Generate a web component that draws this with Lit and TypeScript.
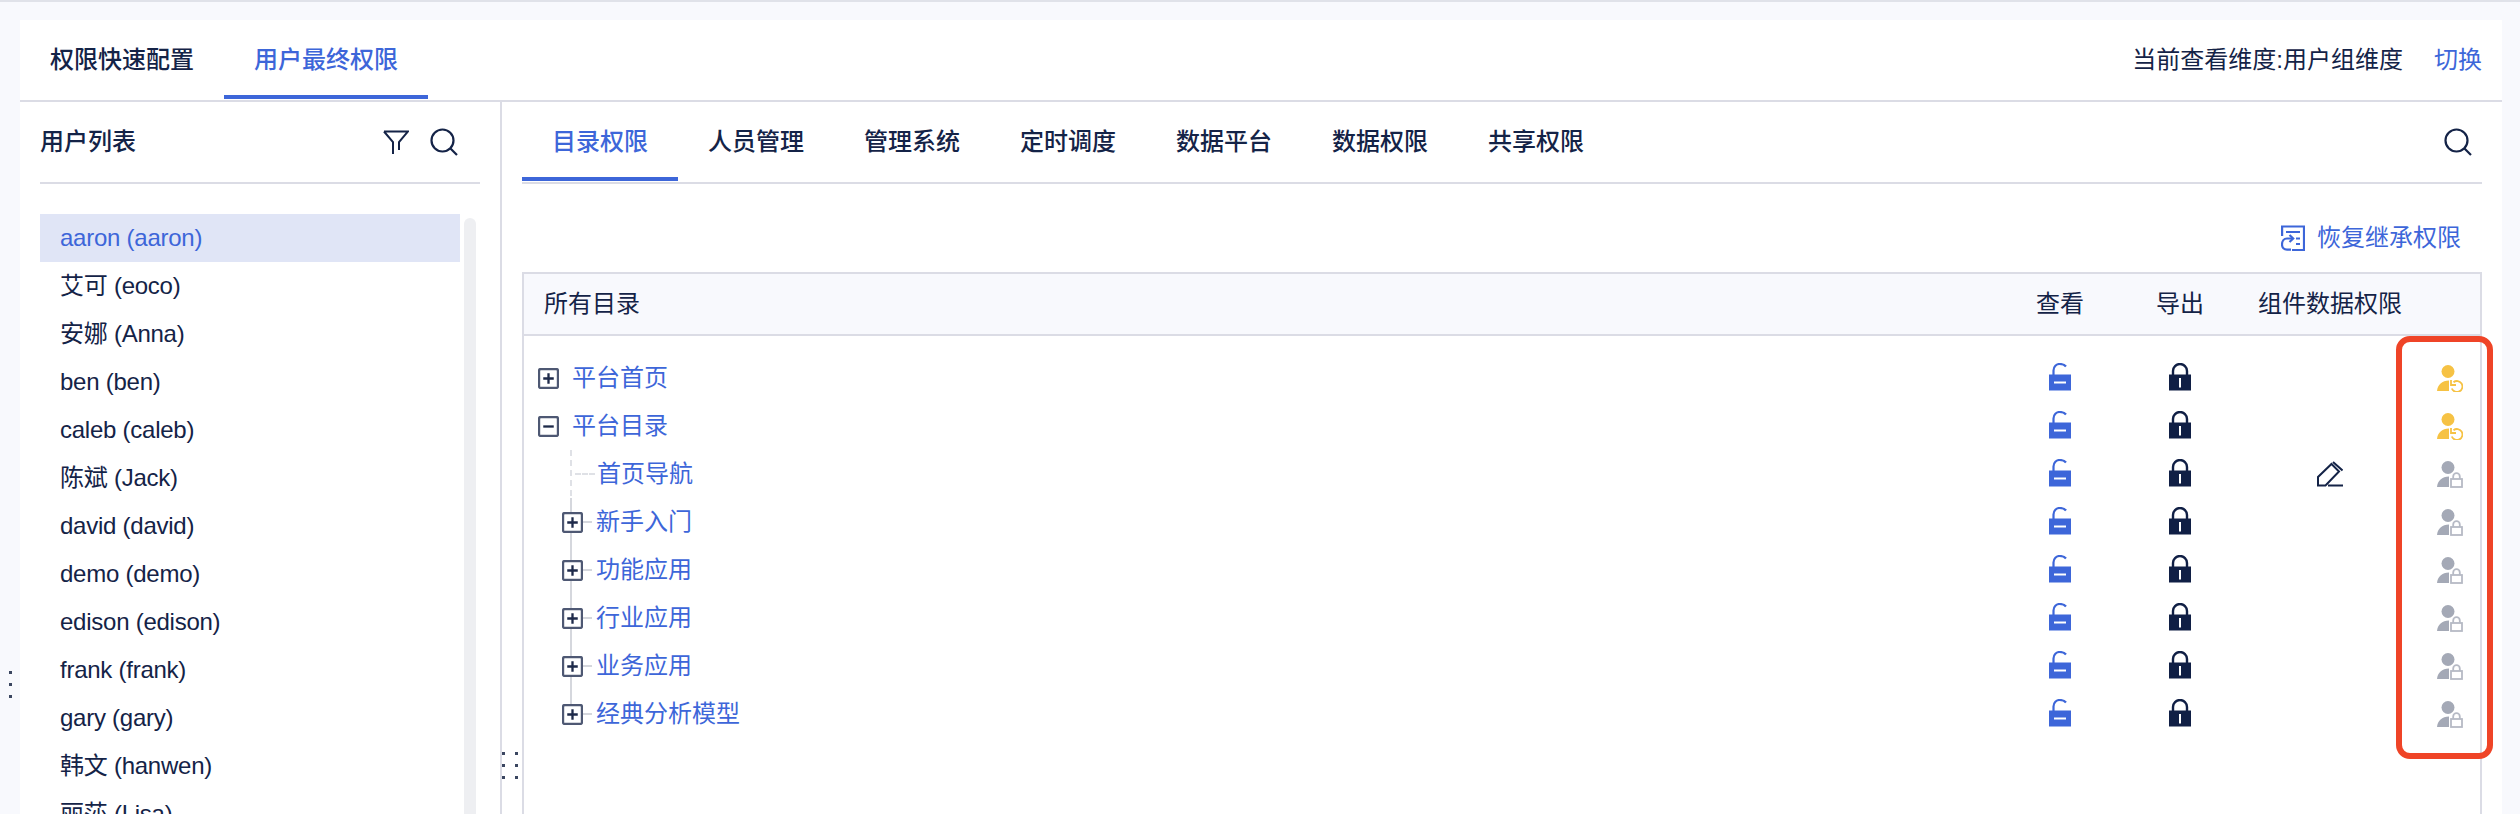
import { LitElement, html, css, svg } from "lit";
import { customElement } from "lit/decorators.js";

const users = ["aaron (aaron)", "艾可 (eoco)", "安娜 (Anna)", "ben (ben)", "caleb (caleb)", "陈斌 (Jack)", "david (david)", "demo (demo)", "edison (edison)", "frank (frank)", "gary (gary)", "韩文 (hanwen)", "丽莎 (Lisa)"];
const subTabs = ["目录权限", "人员管理", "管理系统", "定时调度", "数据平台", "数据权限", "共享权限"];

type Node = { name: string; level: number; icon: "plus" | "minus" | "none"; line: "none" | "leaf" | "mid" | "last"; pencil?: boolean; reset?: boolean };
const nodes: Node[] = [
  { name: "平台首页", level: 0, icon: "plus", line: "none", reset: true },
  { name: "平台目录", level: 0, icon: "minus", line: "none", reset: true },
  { name: "首页导航", level: 1, icon: "none", line: "leaf", pencil: true },
  { name: "新手入门", level: 1, icon: "plus", line: "mid" },
  { name: "功能应用", level: 1, icon: "plus", line: "mid" },
  { name: "行业应用", level: 1, icon: "plus", line: "mid" },
  { name: "业务应用", level: 1, icon: "plus", line: "mid" },
  { name: "经典分析模型", level: 1, icon: "plus", line: "last" },
];

const searchIcon = html`<svg class="i28" viewBox="0 0 28 28" fill="none" stroke="currentColor" stroke-width="2.2"><circle cx="12.5" cy="12.5" r="11"/><path d="M20.5 20.5L27 27"/></svg>`;
const filterIcon = html`<svg class="ifilter" viewBox="0 0 26 24" fill="none" stroke="currentColor" stroke-width="2"><path d="M1 1.5H25L16 12V20M1 1.5L10 12V24"/></svg>`;
const restoreIcon = html`<svg class="irestore" viewBox="0 0 24 26" fill="none" stroke="currentColor" stroke-width="2.2"><path d="M1.1 11V1.5H23V25H11"/><path d="M5 7H19M15 13.5H19M15 19H19"/><path d="M12 13.5H6C3 13.5 1 16 1 19.5C1 22.5 3 24.6 6 24.6H10"/><path d="M8.5 10L12.2 13.5L8.5 17"/></svg>`;
const openLock = html`<svg class="lock" viewBox="0 0 22 28"><path d="M4.5 12V7.5C4.5 3.5 7.5 1 10.5 1C13 1 15.5 1.5 17 3.5" fill="none" stroke="#3d66d9" stroke-width="2.2"/><rect y="11.5" width="22" height="16" fill="#3d66d9"/><rect x="5" y="18.5" width="12" height="2" fill="#fff"/></svg>`;
const closedLock = html`<svg class="lock" viewBox="0 0 22 28"><path d="M4 12V8a7 7 0 0 1 14 0v4" fill="none" stroke="#101f45" stroke-width="2.4"/><rect y="11.5" width="22" height="16" fill="#101f45"/><rect x="10" y="15" width="2" height="9.5" fill="#fff"/></svg>`;
const pencilIcon = html`<svg class="pencil" viewBox="0 0 26 26" fill="none" stroke="#142347" stroke-width="2"><path d="M1 24.5V16L14.5 3L22 10.5L8.5 24.5Z"/><path d="M16 1L25.5 9.5M11 24.5H26"/></svg>`;
const personBase = (c: string) => svg`<circle cx="11" cy="7.5" r="6.5" fill="${c}"/><path d="M12 16.5V27H0C0.5 21 5 16.5 12 16.5Z" fill="${c}"/>`;
const personReset = html`<svg class="person" viewBox="0 0 26 28" fill="none">${personBase("#f6c244")}<path d="M14 16V21H19M16.5 18.2A5.5 5.5 0 1 1 14.8 24.5" stroke="#f6c244" stroke-width="1.8"/></svg>`;
const personLock = html`<svg class="person" viewBox="0 0 26 28" fill="none">${personBase("#a4a9b6")}<rect x="14" y="19" width="11" height="8" stroke="#b6bac5" stroke-width="1.8"/><path d="M16.2 19V16.5a3.3 3.3 0 0 1 6.6 0V19" stroke="#b6bac5" stroke-width="1.8"/></svg>`;

const treeBox = (kind: "plus" | "minus") => html`<svg class="tbox" viewBox="0 0 20 20" fill="none"><rect x="1" y="1" width="18" height="18" rx="1.5" fill="#fff" stroke="#4e5873" stroke-width="2.2"/><path d="${kind === "plus" ? "M5 10H15M10 5V15" : "M5 10H15"}" stroke="#1e2a4a" stroke-width="2.2"/></svg>`;

@customElement("app-root")
export class AppRoot extends LitElement {
  static styles = css`
    :host {
      display: block;
      position: relative;
      height: 814px;
      overflow: hidden;
      box-sizing: border-box;
      background: #f8f9fd;
      border-top: 2px solid #e0e2e9;
      padding: 18px 18px 0 20px;
      color: #142347;
      font: 400 24px/1.2 "Liberation Sans", "Noto Sans CJK SC", sans-serif;
    }
    svg { display: block; flex: none; }
    .card { background: #fff; height: 794px; display: flex; flex-direction: column; }
    .top { display: flex; align-items: flex-start; height: 82px; box-sizing: border-box; border-bottom: 2px solid #dbdce5; flex: none; }
    .toptab { width: 204px; height: 79px; box-sizing: border-box; line-height: 80px; text-align: center; font-weight: 500; }
    .toptab.on, .subtab.on { color: #3d66d9; border-bottom: 4px solid #3d66d9; }
    .view { margin-left: auto; display: flex; gap: 31px; padding-right: 20px; line-height: 80px; }
    .blue { color: #3d66d9; }
    .body { flex: 1; display: flex; min-height: 0; }
    .side { width: 482px; box-sizing: border-box; border-right: 2px solid #dbdce5; padding-left: 20px; flex: none; }
    .sidehead { width: 440px; height: 82px; box-sizing: border-box; border-bottom: 2px solid #dbdce5; display: flex; align-items: center; padding: 0 22px 0 0; font-weight: 500; }
    .sidehead span { margin-right: auto; }
    .sideicons { display: flex; gap: 21px; align-items: center; }
    .i28 { width: 28px; height: 28px; }
    .ifilter { width: 26px; height: 24px; }
    .irestore { width: 24px; height: 26px; }
    .listwrap { display: flex; margin-top: 30px; gap: 4px; }
    .list { width: 420px; }
    .user { height: 48px; line-height: 48px; padding-left: 20px; letter-spacing: -0.25px; white-space: nowrap; }
    .user.on { background: #e0e5f6; color: #3d66d9; }
    .scroll { width: 12px; margin-top: 4px; background: #eeeff2; border-radius: 6px 6px 0 0; }
    .main { flex: 1; min-width: 0; box-sizing: border-box; padding: 0 20px; display: flex; flex-direction: column; }
    .subhead { height: 82px; flex: none; box-sizing: border-box; border-bottom: 2px solid #dbdce5; display: flex; align-items: flex-start; }
    .subtab { width: 156px; height: 79px; box-sizing: border-box; text-align: center; line-height: 80px; font-weight: 500; }
    .subsearch { margin: 26px 10px 0 auto; }
    .restore { height: 88px; flex: none; box-sizing: border-box; display: flex; justify-content: flex-end; align-items: center; gap: 12px; padding: 20px 21px 0 0; color: #3d66d9; }
    .table { flex: 1; border: 2px solid #dbdce5; border-bottom: none; }
    .grid { display: grid; grid-template-columns: 1fr 120px 120px 180px 60px; align-items: center; }
    .grid > .c { display: flex; justify-content: center; align-items: center; }
    .thead { height: 62px; box-sizing: border-box; background: #f8f9fd; border-bottom: 2px solid #dbdce5; }
    .thead .first { padding-left: 20px; }
    .tbody { padding-top: 18px; }
    .row { height: 48px; }
    .tree { position: relative; height: 48px; display: flex; align-items: center; gap: 13px; color: #3d66d9; }
    .tree.l0 { padding-left: 14px; }
    .tree.l1 { padding-left: 38px; }
    .tree.leaf { padding-left: 73px; }
    .tbox { width: 21px; height: 21px; position: relative; }
    .v, .h { position: absolute; }
    .v { left: 46px; top: 0; height: 48px; width: 2px; background: #d5d7dd; }
    .v.half { height: 24px; }
    .v.dash, .h.dash { background: none; }
    .v.dash { border-left: 2px dashed #dfe1e6; width: 0; height: 46px; }
    .h { left: 58px; top: 23px; width: 10px; height: 2px; background: #d5d7dd; }
    .h.dash { left: 51px; width: 20px; height: 0; border-top: 2px dashed #dfe1e6; }
    .lock { width: 22px; height: 28px; margin-bottom: 2px; }
    .pencil { width: 26px; height: 26px; }
    .person { width: 26px; height: 28px; }
    .redbox { position: absolute; left: 2396px; top: 334px; width: 97px; height: 423px; box-sizing: border-box; border: 6px solid #ef4427; border-radius: 14px; }
    .dots { position: absolute; display: flex; flex-direction: column; gap: 9px; }
    .dots i { display: block; width: 3px; height: 3px; background: #3a4660; }
    .d1 { left: 9px; top: 669px; }
    .d2 { left: 502px; top: 750px; }
    .d3 { left: 515px; top: 750px; }
  `;

  private dots(cls: string) {
    return html`<div class="dots ${cls}"><i></i><i></i><i></i></div>`;
  }

  private treeCell(n: Node) {
    const cls = n.icon === "none" ? "leaf" : `l${n.level}`;
    return html`<div class="tree ${cls}">
      ${n.line === "leaf" ? html`<span class="v dash"></span><span class="h dash"></span>` : ""}
      ${n.line === "mid" ? html`<span class="v"></span><span class="h"></span>` : ""}
      ${n.line === "last" ? html`<span class="v half"></span><span class="h"></span>` : ""}
      ${n.icon === "none" ? "" : treeBox(n.icon)}
      <span>${n.name}</span>
    </div>`;
  }

  render() {
    return html`
      <div class="card">
        <div class="top">
          <div class="toptab">权限快速配置</div>
          <div class="toptab on">用户最终权限</div>
          <div class="view"><span>当前查看维度:用户组维度</span><span class="blue">切换</span></div>
        </div>
        <div class="body">
          <aside class="side">
            <div class="sidehead"><span>用户列表</span><div class="sideicons">${filterIcon}${searchIcon}</div></div>
            <div class="listwrap">
              <div class="list">${users.map((u, i) => html`<div class="user ${i === 0 ? "on" : ""}">${u}</div>`)}</div>
              <div class="scroll"></div>
            </div>
          </aside>
          <section class="main">
            <div class="subhead">
              ${subTabs.map((t, i) => html`<div class="subtab ${i === 0 ? "on" : ""}">${t}</div>`)}
              <div class="subsearch">${searchIcon}</div>
            </div>
            <div class="restore">${restoreIcon}<span>恢复继承权限</span></div>
            <div class="table">
              <div class="grid thead">
                <div class="first">所有目录</div>
                <div class="c">查看</div>
                <div class="c">导出</div>
                <div class="c">组件数据权限</div>
                <div></div>
              </div>
              <div class="tbody">
                ${nodes.map((n) => html`<div class="grid row">
                  ${this.treeCell(n)}
                  <div class="c">${openLock}</div>
                  <div class="c">${closedLock}</div>
                  <div class="c">${n.pencil ? pencilIcon : ""}</div>
                  <div class="c">${n.reset ? personReset : personLock}</div>
                </div>`)}
              </div>
            </div>
          </section>
        </div>
      </div>
      ${this.dots("d1")}${this.dots("d2")}${this.dots("d3")}
      <div class="redbox"></div>
    `;
  }
}
